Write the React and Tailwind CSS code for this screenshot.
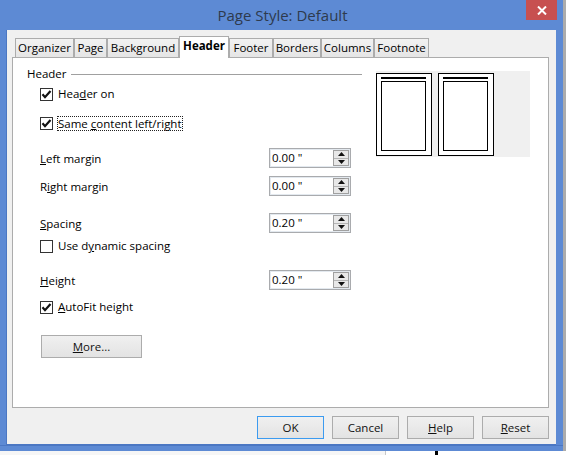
import React from 'react'

const tabs = [
  { label: 'Organizer', w: 'w-[59px]' },
  { label: 'Page', w: 'w-[33px]' },
  { label: 'Background', w: 'w-[72px]' },
  { label: 'Header', w: 'w-[50px]', active: true },
  { label: 'Footer', w: 'w-[44px]' },
  { label: 'Borders', w: 'w-[48px]' },
  { label: 'Columns', w: 'w-[53px]' },
  { label: 'Footnote', w: 'w-[55px]' },
]

function Check({ checked }) {
  return (
    <span className="flex h-[13px] w-[13px] shrink-0 items-center justify-center border border-[#333] bg-white">
      {checked && (
        <svg width="11" height="11" viewBox="0 0 11 11">
          <path d="M1.5 5.3 L4 8.2 L9.5 2" fill="none" stroke="#111" strokeWidth="2.2" />
        </svg>
      )}
    </span>
  )
}

function CheckRow({ checked, children, focus, className = '' }) {
  return (
    <div className={`flex h-[20px] items-center pl-[13px] ${className}`}>
      <Check checked={checked} />
      {focus ? (
        <span className="ml-[4px] border border-dotted border-[#222] leading-[13px]">{children}</span>
      ) : (
        <span className="ml-[5px]">{children}</span>
      )}
    </div>
  )
}

function Spin({ value }) {
  return (
    <div className="flex h-[20px] w-[82px] items-center border border-[#a9abae] bg-white shadow-[inset_0_0_0_1px_#e3e9ef]">
      <span className="flex-1 pl-[2px] text-black">{value}</span>
      <div className="mr-[1px] flex h-[16px] w-[16px] flex-col border border-[#a0a0a0] bg-[#e8e8e8]">
        <div className="flex flex-1 items-center justify-center border-b border-[#b5b5b5]">
          <svg width="7" height="4" viewBox="0 0 7 4"><path d="M0 4 L3.5 0 L7 4Z" fill="#111" /></svg>
        </div>
        <div className="flex flex-1 items-center justify-center">
          <svg width="7" height="4" viewBox="0 0 7 4"><path d="M0 0 L3.5 4 L7 0Z" fill="#111" /></svg>
        </div>
      </div>
    </div>
  )
}

function SpinRow({ label, value, className = '' }) {
  return (
    <div className={`flex h-[20px] items-center pl-[13px] ${className}`}>
      <span className="w-[229px] translate-y-px">{label}</span>
      <Spin value={value} />
    </div>
  )
}

function PagePreview() {
  return (
    <div className="mt-[2px] h-[83px] w-[56px] border border-black bg-white pl-[4px] pr-[5px] pt-[3px]">
      <div className="h-[2px] bg-black" />
      <div className="mt-[2px] h-[70px] border border-black" />
    </div>
  )
}

function Button({ children, primary, className = '' }) {
  return (
    <button
      className={`flex h-[23px] items-center justify-center border bg-gradient-to-b from-[#f0f0f0] to-[#e3e3e3] text-[#111] ${
        primary ? 'border-[#3c9bf0]' : 'border-[#acacac]'
      } ${className}`}
    >
      {children}
    </button>
  )
}

export default function App() {
  return (
    <div className="flex h-[455px] w-[566px] flex-col overflow-hidden bg-white font-['Open_Sans','Liberation_Sans',sans-serif] text-[11.5px] text-black">
      <div className="flex h-[451px]">
        <div className="flex w-[563px] flex-col bg-[#5d8ad4]">
          {/* title bar */}
          <div className="relative flex h-[30px] items-center justify-center">
            <span className="ml-[2px] text-[15px] text-[#2e3a4d]">Page Style: Default</span>
            <div className="absolute right-[6px] top-0 flex h-[20px] w-[31px] items-center justify-center bg-[#c75050]">
              <svg width="10" height="9" viewBox="0 0 10 9">
                <path d="M1 0.5 L9 8.5 M9 0.5 L1 8.5" stroke="#fff" strokeWidth="2" />
              </svg>
            </div>
          </div>

          {/* client area */}
          <div className="ml-[6px] mr-[7px] flex h-[415px] flex-col border-l border-b border-[#4b77c3] bg-[#f0f0f0] pl-[5px] pr-[7px] pt-[6px]">
            {/* tabs */}
            <div className="relative z-10 -mb-px flex h-[22px] items-end pl-[3px]">
              {tabs.map((t) =>
                t.active ? (
                  <div
                    key={t.label}
                    className={`${t.w} flex h-[22px] items-center justify-center border border-b-0 border-[#acacac] bg-white pb-[3px] font-bold`}
                  >
                    {t.label}
                  </div>
                ) : (
                  <div
                    key={t.label}
                    className={`${t.w} mb-px flex h-[19px] items-center justify-center border border-b-0 border-[#acacac] bg-gradient-to-b from-[#f2f2f2] to-[#e5e5e5]`}
                  >
                    {t.label}
                  </div>
                )
              )}
            </div>

            {/* page */}
            <div className="flex h-[351px] border border-[#acacac] bg-white">
              <div className="w-[349px] pl-[14px]">
                <div className="mt-[8px] flex h-[16px] items-center">
                  <span>Header</span>
                  <div className="ml-[4px] h-px flex-1 bg-[#a0a0a0]" />
                </div>
                <CheckRow checked className="mt-[2px]">
                  Hea<u>d</u>er on
                </CheckRow>
                <CheckRow checked focus className="mt-[9px]">
                  Same <u>c</u>ontent left/right
                </CheckRow>
                <SpinRow className="mt-[15px]" value={'0.00 "'} label={<><u>L</u>eft margin</>} />
                <SpinRow className="mt-[8px]" value={'0.00 "'} label={<>R<u>i</u>ght margin</>} />
                <SpinRow className="mt-[17px]" value={'0.20 "'} label={<><u>S</u>pacing</>} />
                <CheckRow className="mt-[3px]">
                  Use d<u>y</u>namic spacing
                </CheckRow>
                <SpinRow className="mt-[14px]" value={'0.20 "'} label={<><u>H</u>eight</>} />
                <CheckRow checked className="mt-[7px]">
                  <u>A</u>utoFit height
                </CheckRow>
                <Button className="ml-[14px] mt-[18px] w-[101px]">
                  <u>M</u>ore...
                </Button>
              </div>

              {/* preview */}
              <div className="ml-[14px] mt-[13px] flex h-[86px] w-[154px] gap-[6px] bg-[#f0f0f0]">
                <PagePreview />
                <PagePreview />
              </div>
            </div>

            {/* buttons */}
            <div className="mt-[8px] flex justify-end gap-[8px]">
              <Button primary className="w-[67px]">OK</Button>
              <Button className="w-[67px]">Cancel</Button>
              <Button className="w-[67px]"><u>H</u>elp</Button>
              <Button className="w-[67px]"><u>R</u>eset</Button>
            </div>
          </div>
          <div className="h-[1px] bg-[#4b77c3]" />
        </div>
        <div className="w-[3px] bg-[#acacac]" />
      </div>
      <div className="flex h-[4px]">
        <div className="w-[385px] bg-[#f6f6f6]" />
        <div className="w-px bg-[#c8c8c8]" />
        <div className="w-[49px] bg-white" />
        <div className="w-[3px] bg-black" />
        <div className="flex-1 bg-white" />
      </div>
    </div>
  )
}
